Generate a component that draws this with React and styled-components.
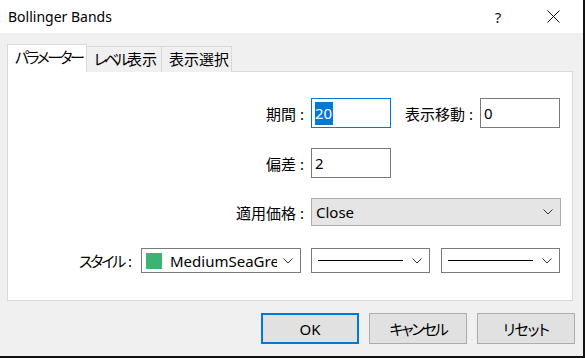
import React from 'react'
import styled, { createGlobalStyle } from 'styled-components'

const GlobalStyle = createGlobalStyle`
  html, body {
    margin: 0;
    padding: 0;
    background: #111;
  }
  body {
    font-family: "Noto Sans", "Noto Sans CJK JP", sans-serif;
    font-feature-settings: "palt";
    color: #000;
  }
  * { box-sizing: border-box; }
`

const Chevron = () => (
  <svg width="10" height="6" viewBox="0 0 10 6">
    <polyline points="0.5,0.5 5,5 9.5,0.5" fill="none" stroke="#333" strokeWidth="1" />
  </svg>
)

const App = () => {
  return (
    <>
      <GlobalStyle />
      <Window>
        <TitleBar>
          <Title>Bollinger Bands</Title>
          <HelpBtn>?</HelpBtn>
          <CloseBtn>
            <svg width="13" height="13" viewBox="0 0 13 13">
              <path d="M0.5 0.5 L12.5 12.5 M12.5 0.5 L0.5 12.5" stroke="#111" strokeWidth="1" />
            </svg>
          </CloseBtn>
        </TitleBar>

        <Body>
          <TabStrip>
            <Tab $active $w={80}><Kana $ls={-2.5}>パラメーター</Kana></Tab>
            <Tab $w={75}><Kana $ls={-3.2}>レベル</Kana>表示</Tab>
            <Tab $w={70}>表示選択</Tab>
          </TabStrip>

          <Panel>
            <Row>
              <Label $w={296}>期間 :</Label>
              <Input $focused $w={80}><Selected>20</Selected></Input>
              <Label $w={82}>表示移動 :</Label>
              <Input $w={80}>0</Input>
            </Row>
            <Row>
              <Label $w={296}>偏差 :</Label>
              <Input $w={80}>2</Input>
            </Row>
            <Row>
              <Label $w={296} $h={28}>適用価格 :</Label>
              <Select $w={250} $h={28} $filled>
                <SelectText>Close</SelectText>
                <Chevron />
              </Select>
            </Row>
            <Row>
              <Label $w={124} $h={25} $gap={9}><Kana $ls={-2.2}>スタイル</Kana>&nbsp;:</Label>
              <Select $w={160} $h={25}>
                <Swatch />
                <SelectText>MediumSeaGreen</SelectText>
                <Chevron />
              </Select>
              <Select $w={119} $h={25} $ml={10}>
                <LineSample />
                <Chevron />
              </Select>
              <Select $w={119} $h={25} $ml={11}>
                <LineSample />
                <Chevron />
              </Select>
            </Row>
          </Panel>
        </Body>

        <ButtonBar>
          <Button $primary>OK</Button>
          <Button><Kana $ls={-2.2}>キャンセル</Kana></Button>
          <Button><Kana $ls={-1}>リセット</Kana></Button>
        </ButtonBar>
      </Window>
    </>
  )
}

export default App

const Window = styled.div`
  width: 583px;
  height: 356px;
  background: #f0f0f0;
  display: flex;
  flex-direction: column;
`

const TitleBar = styled.div`
  height: 33px;
  background: #fff;
  display: flex;
  align-items: center;
  padding: 0 15px 0 8px;
`

const Title = styled.div`
  font-size: 14px;
  color: #000;
`

const HelpBtn = styled.div`
  margin-left: auto;
  width: 30px;
  text-align: center;
  font-size: 15px;
  color: #111;
`

const CloseBtn = styled.div`
  width: 30px;
  margin-left: 25px;
  display: flex;
  justify-content: center;
  align-items: center;
`

const Body = styled.div`
  padding: 11px 0 0 7px;
`

const TabStrip = styled.div`
  display: flex;
  align-items: flex-end;
  height: 28px;
`

const Tab = styled.div`
  width: ${p => p.$w}px;
  height: ${p => (p.$active ? 28 : 26)}px;
  padding-left: 7px;
  font-size: 15px;
  line-height: ${p => (p.$active ? 25 : 24)}px;
  white-space: nowrap;
  overflow: hidden;
  background: ${p => (p.$active ? '#fff' : '#f0f0f0')};
  border: 1px solid #d9d9d9;
  border-bottom: none;
  border-left: ${p => (p.$active ? '1px solid #d9d9d9' : 'none')};
  position: ${p => (p.$active ? 'relative' : 'static')};
  z-index: ${p => (p.$active ? 1 : 'auto')};
`

const Kana = styled.span`
  letter-spacing: ${p => p.$ls}px;
`

const Panel = styled.div`
  margin-top: -1px;
  width: 566px;
  height: 230px;
  background: #fff;
  border: 1px solid #d9d9d9;
  padding-top: 26px;
  display: flex;
  flex-direction: column;
`

const Row = styled.div`
  height: 50px;
  display: flex;
  align-items: flex-start;
`

const Label = styled.div`
  width: ${p => p.$w}px;
  height: ${p => p.$h || 30}px;
  margin-right: ${p => p.$gap || 7}px;
  display: flex;
  align-items: center;
  justify-content: flex-end;
  font-size: 15px;
  white-space: nowrap;
`

const Input = styled.div`
  width: ${p => p.$w}px;
  height: 30px;
  border: 1px solid ${p => (p.$focused ? '#0078d7' : '#7a7a7a')};
  background: #fff;
  padding: 0 3px;
  display: flex;
  align-items: center;
  font-size: 15px;
`

const Selected = styled.span`
  background: #0078d7;
  color: #fff;
  line-height: 23px;
  padding-right: 1px;
`

const Select = styled.div`
  width: ${p => p.$w}px;
  height: ${p => p.$h}px;
  margin-left: ${p => p.$ml || 0}px;
  border: 1px solid ${p => (p.$filled ? '#adadad' : '#7a7a7a')};
  background: ${p => (p.$filled ? '#e5e5e5' : '#fff')};
  display: flex;
  align-items: center;
  padding: 0 7px 0 4px;
  gap: 6px;
  font-size: 15px;

  svg {
    flex-shrink: 0;
    margin-left: auto;
  }
`

const SelectText = styled.span`
  flex: 1;
  overflow: hidden;
  white-space: nowrap;
  text-overflow: clip;
`

const Swatch = styled.span`
  flex-shrink: 0;
  width: 16px;
  height: 16px;
  background: #3cb371;
  margin-right: 2px;
`

const LineSample = styled.span`
  width: 85px;
  margin-left: 2px;
  border-top: 1px solid #000;
`

const ButtonBar = styled.div`
  display: flex;
  justify-content: flex-end;
  gap: 10px;
  padding: 12px 8px 0 0;
`

const Button = styled.button`
  width: 98px;
  height: 31px;
  font-family: inherit;
  font-feature-settings: "palt";
  font-size: 15px;
  color: #000;
  background: #e1e1e1;
  border: ${p => (p.$primary ? '2px solid #0078d7' : '1px solid #adadad')};
  padding: 0;
`
